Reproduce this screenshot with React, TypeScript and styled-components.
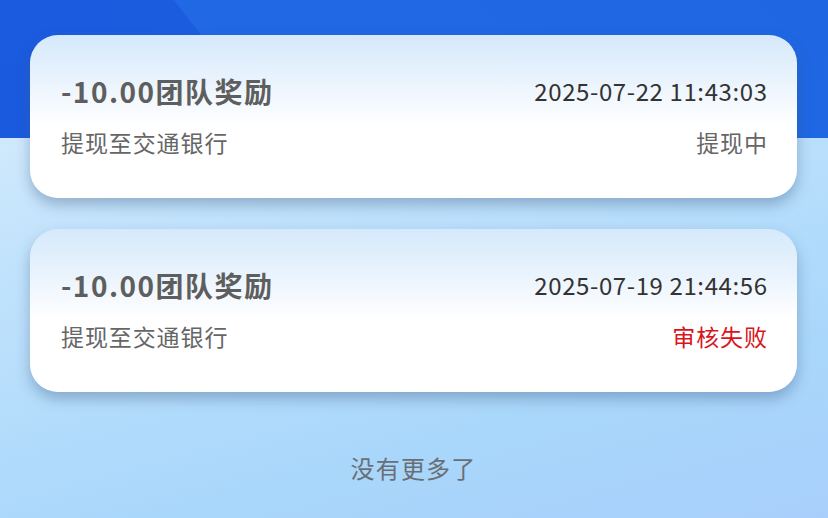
import styled, { createGlobalStyle } from 'styled-components'

interface Record {
  amount: string
  title: string
  time: string
  bank: string
  status: string
  failed?: boolean
}

const records: Record[] = [
  {
    amount: '-10.00',
    title: '团队奖励',
    time: '2025-07-22 11:43:03',
    bank: '提现至交通银行',
    status: '提现中',
  },
  {
    amount: '-10.00',
    title: '团队奖励',
    time: '2025-07-19 21:44:56',
    bank: '提现至交通银行',
    status: '审核失败',
    failed: true,
  },
]

const GlobalStyle = createGlobalStyle`
  html, body {
    margin: 0;
    padding: 0;
  }
  body {
    font-family: "Noto Sans CJK SC", "Noto Sans", sans-serif;
  }
`

export default function App() {
  return (
    <>
      <GlobalStyle />
      <Page>
        <List>
          {records.map((r) => (
            <Card key={r.time}>
              <Row>
                <Title>
                  {r.amount}
                  {r.title}
                </Title>
                <Time>{r.time}</Time>
              </Row>
              <Row>
                <Bank>{r.bank}</Bank>
                <Status $failed={r.failed}>{r.status}</Status>
              </Row>
            </Card>
          ))}
        </List>
        <NoMore>没有更多了</NoMore>
      </Page>
    </>
  )
}

const Page = styled.div`
  min-height: 518px;
  box-sizing: border-box;
  padding: 35px 31px 0 30px;
  background:
    linear-gradient(52deg, #1a5adf 0%, #1b5cdf 30%, #2068e4 30.2%, #1f66e3 100%)
      top / 100% 138px no-repeat,
    linear-gradient(165deg, #e0f0fd 0%, #c2e3fc 35%, #a9d7fb 75%, #a8cffb 100%);
`

const List = styled.div`
  display: flex;
  flex-direction: column;
  gap: 31px;
`

const Card = styled.div`
  height: 163px;
  box-sizing: border-box;
  padding: 38px 30px 0 31px;
  border-radius: 28px;
  background: linear-gradient(180deg, #d5e9fb 0%, #ebf4fd 30%, #ffffff 55%);
  box-shadow: 0 7px 14px rgba(60, 90, 130, 0.38);
  display: flex;
  flex-direction: column;
  gap: 17px;
`

const Row = styled.div`
  display: flex;
  align-items: center;
  justify-content: space-between;
`

const Title = styled.span`
  font-size: 28px;
  line-height: 36px;
  font-weight: 700;
  letter-spacing: 1.5px;
  color: #5e5e5e;
`

const Time = styled.span`
  font-size: 24px;
  line-height: 36px;
  letter-spacing: 0.6px;
  margin-right: -0.6px;
  color: #333333;
`

const Bank = styled.span`
  font-size: 23px;
  line-height: 32px;
  letter-spacing: 0.9px;
  color: #666666;
`

const Status = styled.span<{ $failed?: boolean }>`
  font-size: 23px;
  line-height: 32px;
  letter-spacing: 0.9px;
  margin-right: -0.9px;
  color: ${(p) => (p.$failed ? '#d7151b' : '#666666')};
`

const NoMore = styled.div`
  margin-top: 60px;
  text-align: center;
  font-size: 24px;
  line-height: 32px;
  letter-spacing: 1.2px;
  color: #6a6f75;
`
